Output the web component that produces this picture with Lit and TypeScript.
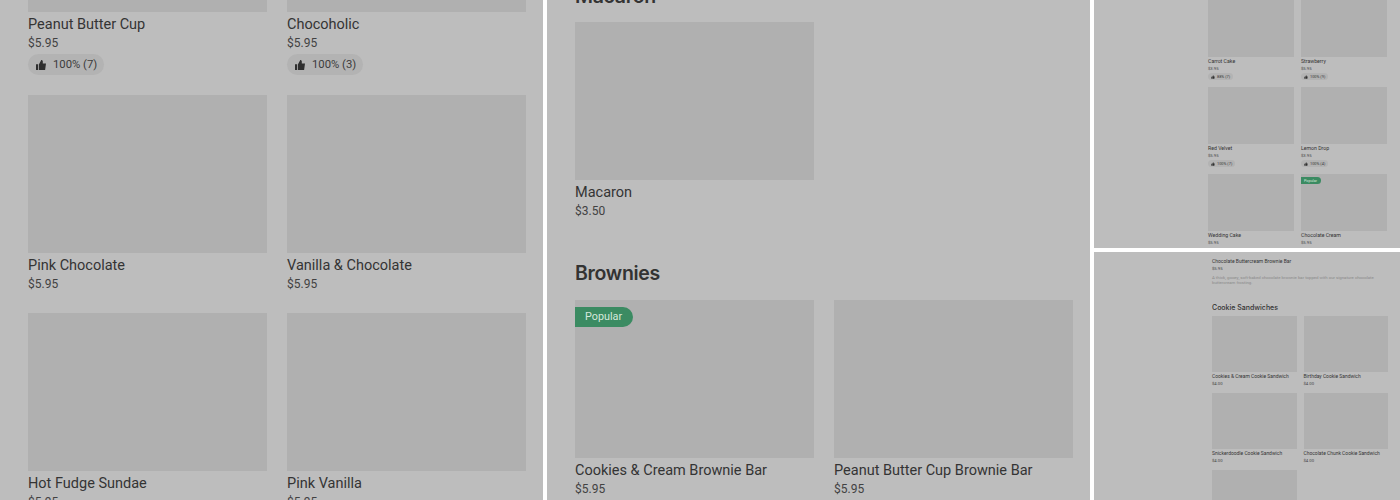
import { LitElement, html, css } from "lit";
import { customElement } from "lit/decorators.js";

type Item = { n: string; p: string; r?: string; pop?: boolean };

const thumb = html`<svg class="thumb" viewBox="0 0 12 12" aria-hidden="true"><path d="M1 5.2h2.2V11H1zM4 11V5.2L6.3 1c.9 0 1.5.6 1.5 1.5V4.6H11l-.9 6.4z"/></svg>`;

const card = (i: Item) => html`<div class="card">
  <div class="img">${i.pop ? html`<span class="badge">Popular</span>` : ""}</div>
  <div class="name">${i.n}</div>
  <div class="price">${i.p}</div>
  ${i.r ? html`<div class="pill">${thumb}<span>${i.r}</span></div>` : ""}
</div>`;

const grid = (items: Item[]) => html`<div class="grid">${items.map(card)}</div>`;

@customElement("app-root")
export class AppRoot extends LitElement {
  static styles = css`
    :host { display: block; width: 1400px; height: 500px; background: #fff; overflow: hidden; font-family: Roboto, "Liberation Sans", sans-serif; color: #343434; }
    .page { display: grid; grid-template-columns: 543px 543px 306px; grid-template-rows: 248px 248px; gap: 4px; }
    .panel { background: #bdbdbd; overflow: hidden; }
    .tall { grid-row: 1 / 3; height: 500px; }
    .grid { display: grid; grid-template-columns: var(--w) var(--w); column-gap: var(--gx); row-gap: var(--gy); align-items: start; }
    .card { display: flex; flex-direction: column; align-items: flex-start; }
    .img { position: relative; align-self: stretch; height: var(--h); background: #b0b0b0; }
    .name { font-size: var(--fn); line-height: var(--ln); margin-top: var(--mt); white-space: nowrap; }
    .price { font-size: var(--fp); line-height: var(--lp); margin-top: var(--pt); color: #424242; white-space: nowrap; }
    .pill { display: flex; align-items: center; gap: var(--pg); height: var(--ph); padding: 0 var(--px); margin-top: var(--pm); border-radius: 99px; background: #b3b3b3; font-size: var(--fr); white-space: nowrap; color: #3c3c3c; }
    .thumb { width: var(--ti); height: var(--ti); fill: #2f2f2f; flex: none; }
    .badge { position: absolute; left: 0; top: var(--bt); height: var(--bh); line-height: var(--bh); padding: 0 var(--bx) 0 var(--bl); border-radius: 0 99px 99px 0; background: #3b8b62; color: #d5e8dc; font-size: var(--fb); }
    h2 { margin: 0; font-family: Inter, sans-serif; font-weight: 600; letter-spacing: -0.3px; color: #333; }

    .full { --w: 239px; --gx: 20px; --gy: 20px; --h: 158px; --fn: 14.5px; --ln: 20px; --mt: 3px; --fp: 12px; --lp: 17px; --pt: 0px; --pg: 6px; --ph: 21px; --px: 7px; --pm: 2px; --fr: 11.3px; --ti: 12px; --bt: 7px; --bh: 20px; --bx: 11px; --bl: 10px; --fb: 10.8px; }
    .p1 { padding-left: 28px; margin-top: -146px; }
    .p2 { padding-left: 28px; }
    .p2 h2 { font-size: 19.5px; line-height: 28px; }
    .p2 .macaron { margin-top: -18px; }
    .p2 .macaron .grid { margin-top: 12px; }
    .p2 .brownies .grid { margin-top: 13px; }
    .p2 .brownies { margin-top: 39px; }

    .mini { --gx: 7px; --fn: 5.2px; --ln: 7px; --mt: 1px; --fp: 4.2px; --lp: 6px; --pt: 1px; --pg: 2px; --ph: 7px; --px: 3px; --pm: 1px; --fr: 3.9px; --ti: 4px; --bt: 2.5px; --bh: 7px; --bx: 4px; --bl: 3px; --fb: 3.8px; }
    .p3 { --w: 86px; --h: 57px; --gy: 7px; padding-left: 114px; }
    .p4 { --w: 84.5px; --h: 56px; --gy: 6px; --fn: 4.95px; padding: 5px 0 0 118px; }
    .p4 .item { font-size: 5px; line-height: 8px; }
    .p4 .ip { font-size: 4.2px; line-height: 8px; color: #424242; }
    .p4 .desc { font-size: 4.3px; line-height: 5.5px; width: 172px; color: #8a8a8a; margin-top: 1.5px; }
    .p4 h3 { margin: 17px 0 3px; font-family: Inter, sans-serif; font-size: 7px; line-height: 10px; font-weight: 500; color: #333; }
  `;

  render() {
    return html`<div class="page">
      <section class="panel tall full"><div class="p1">
        ${grid([
          { n: "Peanut Butter Cup", p: "$5.95", r: "100% (7)" },
          { n: "Chocoholic", p: "$5.95", r: "100% (3)" },
          { n: "Pink Chocolate", p: "$5.95" },
          { n: "Vanilla & Chocolate", p: "$5.95" },
          { n: "Hot Fudge Sundae", p: "$5.95" },
          { n: "Pink Vanilla", p: "$5.95" },
        ])}
      </div></section>
      <section class="panel tall full"><div class="p2">
        <div class="macaron"><h2>Macaron</h2>${grid([{ n: "Macaron", p: "$3.50" }])}</div>
        <div class="brownies"><h2>Brownies</h2>${grid([
          { n: "Cookies & Cream Brownie Bar", p: "$5.95", pop: true },
          { n: "Peanut Butter Cup Brownie Bar", p: "$5.95" },
        ])}</div>
      </div></section>
      <section class="panel mini"><div class="p3">
        ${grid([
          { n: "Carrot Cake", p: "$3.95", r: "88% (7)" },
          { n: "Strawberry", p: "$5.95", r: "100% (9)" },
          { n: "Red Velvet", p: "$5.95", r: "100% (7)" },
          { n: "Lemon Drop", p: "$3.95", r: "100% (4)" },
          { n: "Wedding Cake", p: "$5.95" },
          { n: "Chocolate Cream", p: "$5.95", pop: true },
        ])}
      </div></section>
      <section class="panel mini"><div class="p4">
        <div class="item">Chocolate Buttercream Brownie Bar</div>
        <div class="ip">$5.95</div>
        <div class="desc">A thick, gooey, soft-baked chocolate brownie bar topped with our signature chocolate buttercream frosting.</div>
        <h3>Cookie Sandwiches</h3>
        ${grid([
          { n: "Cookies & Cream Cookie Sandwich", p: "$4.00" },
          { n: "Birthday Cookie Sandwich", p: "$4.00" },
          { n: "Snickerdoodle Cookie Sandwich", p: "$4.00" },
          { n: "Chocolate Chunk Cookie Sandwich", p: "$4.00" },
          { n: "Sugar Cookie Sandwich", p: "$4.00" },
        ])}
      </div></section>
    </div>`;
  }
}
